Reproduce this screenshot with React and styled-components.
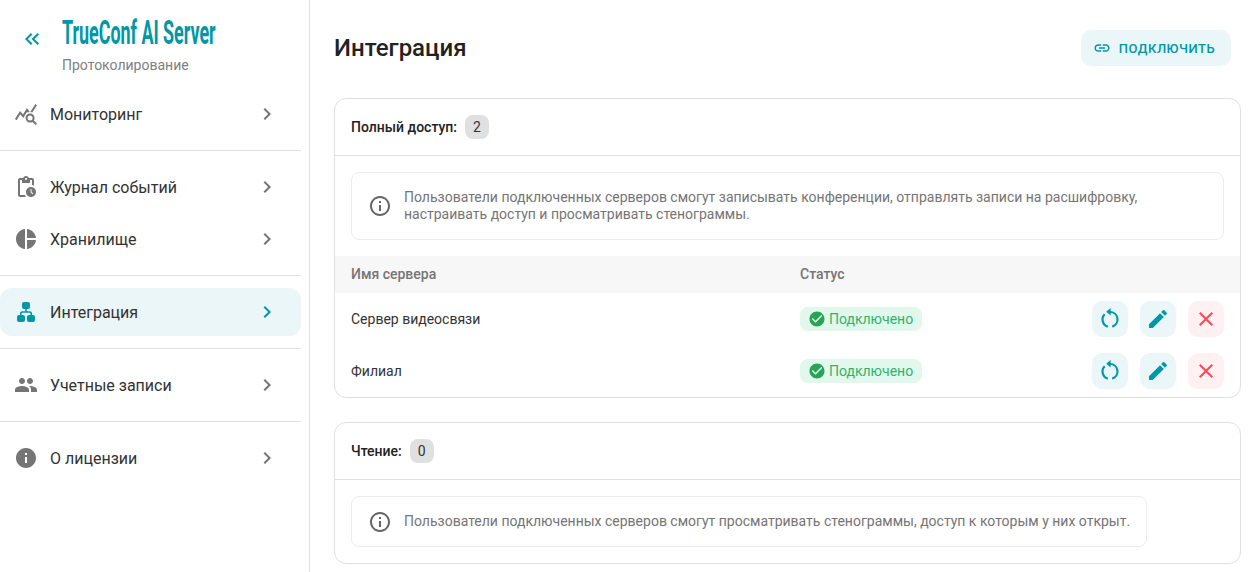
import React from "react";
import styled, { createGlobalStyle } from "styled-components";
import {
  MdCheckCircle,
  MdChevronRight,
  MdClose,
  MdEdit,
  MdInfo,
  MdInfoOutline,
  MdKeyboardDoubleArrowLeft,
  MdLink,
  MdOutlinePendingActions,
  MdPeople,
  MdPieChart,
  MdQueryStats,
} from "react-icons/md";

const GlobalStyle = createGlobalStyle`
  html, body {
    margin: 0;
    padding: 0;
    background: #fff;
  }

  body {
    font-family: Roboto, "Noto Sans", sans-serif;
    color: #333;
  }

  * {
    box-sizing: border-box;
  }
`;

const Layout = styled.div`
  display: flex;
  height: 572px;
  overflow: hidden;
`;

const Sidebar = styled.aside`
  width: 310px;
  flex: none;
  padding-right: 8px;
  border-right: 1px solid #e0e0e0;
`;

const Brand = styled.div`
  height: 90px;
  display: flex;
`;

const BackButton = styled.button`
  width: 62px;
  flex: none;
  border: none;
  background: none;
  padding: 27px 0 0 1px;
  height: 64px;
  display: flex;
  justify-content: center;
  color: #0097a7;
  font-size: 24px;
`;

const BrandText = styled.div`
  padding-top: 14px;
`;

const Logo = styled.div`
  width: 154px;
  height: 38px;
  font-size: 33px;
  line-height: 38px;
  font-weight: 700;
  color: #0097a7;
  white-space: nowrap;
  transform: scaleX(0.542);
  transform-origin: left center;
`;

const Product = styled.div`
  margin-top: 3px;
  font-size: 14px;
  line-height: 20px;
  color: #808080;
`;

const NavGroup = styled.div`
  display: flex;
  flex-direction: column;
  gap: 4px;
  padding-bottom: 12px;
  margin-bottom: 12px;
  border-bottom: ${(p) => (p.$last ? "none" : "1px solid #e0e0e0")};
`;

const NavItem = styled.div`
  height: 48px;
  display: flex;
  align-items: center;
  padding: 0 22px 0 14px;
  border-radius: 12px;
  background: ${(p) => (p.$active ? "#eaf6f8" : "transparent")};
  color: #333;
  font-size: 16px;
`;

const NavIcon = styled.span`
  width: 36px;
  flex: none;
  display: flex;
  align-items: center;
  font-size: 24px;
  color: ${(p) => (p.$active ? "#0097a7" : "#757575")};
`;

const NavLabel = styled.span`
  flex: 1;
`;

const NavArrow = styled.span`
  display: flex;
  font-size: 24px;
  color: ${(p) => (p.$active ? "#0097a7" : "#757575")};
`;

const Main = styled.main`
  flex: 1;
  min-width: 0;
  padding: 0 9px 8px 24px;
`;

const TopBar = styled.header`
  height: 98px;
  padding: 30px 10px 32px 0;
  display: flex;
  align-items: center;
  justify-content: space-between;
`;

const Title = styled.h1`
  margin: 0;
  font-size: 24px;
  line-height: 36px;
  font-weight: 500;
  color: #222;
`;

const ConnectButton = styled.button`
  height: 36px;
  width: 150px;
  padding: 0 4px 0 0;
  display: flex;
  align-items: center;
  justify-content: center;
  gap: 8px;
  border: none;
  border-radius: 10px;
  background: #eaf6f8;
  color: #0097a7;
  font-family: inherit;
  font-size: 13px;
  font-weight: 500;
  letter-spacing: 0.5px;
  text-transform: uppercase;

  svg {
    font-size: 18px;
  }
`;

const Card = styled.section`
  border: 1px solid #e0e0e0;
  border-radius: 12px;
  margin-bottom: 24px;
  overflow: hidden;
  background: #fff;

  &:last-child {
    margin-bottom: 0;
  }
`;

const CardHeader = styled.div`
  height: 57px;
  display: flex;
  align-items: center;
  gap: 8px;
  padding: 0 16px;
  border-bottom: 1px solid #e0e0e0;
`;

const CardTitle = styled.span`
  font-size: 14px;
  font-weight: 500;
  color: #222;
`;

const Count = styled.span`
  min-width: 24px;
  height: 24px;
  padding: 0 4px;
  display: flex;
  align-items: center;
  justify-content: center;
  border-radius: 8px;
  background: #e0e0e0;
  font-size: 14px;
  color: #333;
`;

const CardBody = styled.div`
  padding: 16px;
`;

const Notice = styled.div`
  display: ${(p) => (p.$fit ? "inline-flex" : "flex")};
  vertical-align: top;
  align-items: center;
  gap: 12px;
  padding: 0 16px;
  border: 1px solid #ececec;
  border-radius: 8px;
  font-size: 14px;
  line-height: 17px;
  color: #757575;

  svg {
    flex: none;
    font-size: 24px;
    color: #666;
  }
`;

const NoticeText = styled.div`
  max-width: 760px;
  padding: 16px 0;
`;

const TableHead = styled.div`
  height: 37px;
  display: grid;
  grid-template-columns: 449px 1fr;
  align-items: center;
  padding: 0 16px 2px;
  background: #f7f7f7;
  font-size: 14px;
  font-weight: 500;
  color: #757575;
`;

const Row = styled.div`
  height: 52px;
  display: grid;
  grid-template-columns: 449px 1fr auto;
  align-items: center;
  padding: 0 16px;
  font-size: 14px;
  color: #333;
`;

const StatusCell = styled.div`
  display: flex;
`;

const Status = styled.span`
  display: flex;
  align-items: center;
  gap: 3px;
  height: 24px;
  width: 122px;
  padding: 0 8px;
  border-radius: 8px;
  background: #e3f8ec;
  color: #2db46c;
  font-size: 14px;

  svg {
    flex: none;
    font-size: 18px;
    color: #27a456;
  }
`;

const Actions = styled.div`
  display: flex;
  gap: 12px;
`;

const IconButton = styled.button`
  width: 36px;
  height: 36px;
  padding: 0;
  display: flex;
  align-items: center;
  justify-content: center;
  border: none;
  border-radius: 10px;
  background: ${(p) => (p.$danger ? "#fff0f1" : "#eaf6f8")};
  color: ${(p) => (p.$danger ? "#ff4757" : "#0097a7")};
  font-size: 24px;
`;

function ReloadIcon() {
  return (
    <svg width="24" height="24" viewBox="0 0 24 24" fill="none">
      <path
        d="M12 5a7.5 7.5 0 0 1 2.2 14.67M9.8 19.67A7.5 7.5 0 0 1 6.7 7.2"
        stroke="currentColor"
        strokeWidth="2.2"
      />
      <path d="M12.6 1v7.4L8.2 4.7z" fill="currentColor" />
    </svg>
  );
}

function TreeIcon() {
  return (
    <svg width="1em" height="1em" viewBox="0 0 24 24" fill="currentColor">
      <rect x="8" y="2" width="8" height="7" rx="2" />
      <rect x="3" y="15" width="8" height="7" rx="2" />
      <rect x="13" y="15" width="8" height="7" rx="2" />
      <path
        d="M12 9v3M6.8 15v-1.6a1.4 1.4 0 0 1 1.4-1.4h7.6a1.4 1.4 0 0 1 1.4 1.4V15"
        fill="none"
        stroke="currentColor"
        strokeWidth="1.6"
      />
    </svg>
  );
}

const navGroups = [
  [{ label: "Мониторинг", icon: <MdQueryStats /> }],
  [
    { label: "Журнал событий", icon: <MdOutlinePendingActions /> },
    { label: "Хранилище", icon: <MdPieChart /> },
  ],
  [{ label: "Интеграция", icon: <TreeIcon />, active: true }],
  [{ label: "Учетные записи", icon: <MdPeople /> }],
  [{ label: "О лицензии", icon: <MdInfo /> }],
];

const servers = ["Сервер видеосвязи", "Филиал"];

export default function App() {
  return (
    <Layout>
      <GlobalStyle />
      <Sidebar>
        <Brand>
          <BackButton>
            <MdKeyboardDoubleArrowLeft />
          </BackButton>
          <BrandText>
            <Logo>TrueConf AI Server</Logo>
            <Product>Протоколирование</Product>
          </BrandText>
        </Brand>
        {navGroups.map((group, i) => (
          <NavGroup key={i} $last={i === navGroups.length - 1}>
            {group.map((item) => (
              <NavItem key={item.label} $active={item.active}>
                <NavIcon $active={item.active}>{item.icon}</NavIcon>
                <NavLabel>{item.label}</NavLabel>
                <NavArrow $active={item.active}>
                  <MdChevronRight />
                </NavArrow>
              </NavItem>
            ))}
          </NavGroup>
        ))}
      </Sidebar>
      <Main>
        <TopBar>
          <Title>Интеграция</Title>
          <ConnectButton>
            <MdLink />
            Подключить
          </ConnectButton>
        </TopBar>
        <Card>
          <CardHeader>
            <CardTitle>Полный доступ:</CardTitle>
            <Count>2</Count>
          </CardHeader>
          <CardBody>
            <Notice>
              <MdInfoOutline />
              <NoticeText>
                Пользователи подключенных серверов смогут записывать конференции, отправлять записи на расшифровку,
                настраивать доступ и просматривать стенограммы.
              </NoticeText>
            </Notice>
          </CardBody>
          <TableHead>
            <span>Имя сервера</span>
            <span>Статус</span>
          </TableHead>
          {servers.map((name) => (
            <Row key={name}>
              <span>{name}</span>
              <StatusCell>
                <Status>
                  <MdCheckCircle />
                  Подключено
                </Status>
              </StatusCell>
              <Actions>
                <IconButton>
                  <ReloadIcon />
                </IconButton>
                <IconButton>
                  <MdEdit />
                </IconButton>
                <IconButton $danger>
                  <MdClose />
                </IconButton>
              </Actions>
            </Row>
          ))}
        </Card>
        <Card>
          <CardHeader>
            <CardTitle>Чтение:</CardTitle>
            <Count>0</Count>
          </CardHeader>
          <CardBody>
            <Notice $fit>
              <MdInfoOutline />
              <NoticeText>
                Пользователи подключенных серверов смогут просматривать стенограммы, доступ к которым у них открыт.
              </NoticeText>
            </Notice>
          </CardBody>
        </Card>
      </Main>
    </Layout>
  );
}
